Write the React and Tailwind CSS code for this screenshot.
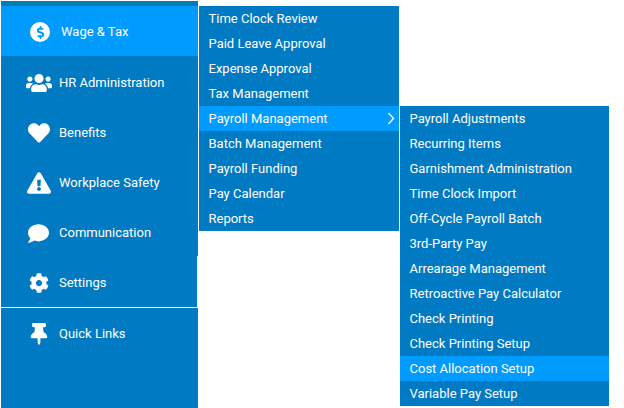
import React from 'react';
import { FaUsers, FaHeart, FaExclamationTriangle, FaComment, FaCog, FaThumbtack, FaDollarSign } from 'react-icons/fa';

const mainItems = [
    { label: 'HR Administration', icon: <FaUsers className="text-[26px]" /> },
    { label: 'Benefits', icon: <FaHeart className="text-[22px]" /> },
    { label: 'Workplace Safety', icon: <FaExclamationTriangle className="text-[24px]" /> },
    { label: 'Communication', icon: <FaComment className="text-[21px]" /> },
];

const payrollItems = [
    'Time Clock Review',
    'Paid Leave Approval',
    'Expense Approval',
    'Tax Management',
    'Payroll Management',
    'Batch Management',
    'Payroll Funding',
    'Pay Calendar',
    'Reports',
];

const subItems = [
    'Payroll Adjustments',
    'Recurring Items',
    'Garnishment Administration',
    'Time Clock Import',
    'Off-Cycle Payroll Batch',
    '3rd-Party Pay',
    'Arrearage Management',
    'Retroactive Pay Calculator',
    'Check Printing',
    'Check Printing Setup',
    'Cost Allocation Setup',
    'Variable Pay Setup',
];

const MenuRow = ({ label, active, children }) => (
    <div className={`flex items-center justify-between h-[25px] pl-[9.5px] pr-[4px] ${active ? 'bg-[#009bff]' : ''}`}>
        <span>{label}</span>
        {children}
    </div>
);

const App = () => {
    return (
        <div className="flex items-start w-[624px] h-[408px] overflow-hidden bg-white text-[13px] text-white font-['Roboto',sans-serif]">
            <div className="ml-px mt-px w-[197px] h-[407px] bg-[#007ac2]">
                <div className="h-[5px] bg-[#037bb9]"></div>
                <div className="flex items-center h-[50px] pt-[2px] bg-[#009bff]">
                    <div className="flex justify-center w-[58px] shrink-0 text-[#009bff] pl-[20px]">
                        <span className="flex items-center justify-center w-[20px] h-[20px] rounded-full bg-white">
                            <FaDollarSign className="text-[13px]" />
                        </span>
                    </div>
                    <span className="ml-[2px]">Wage &amp; Tax</span>
                </div>
                {mainItems.map(item => (
                    <div key={item.label} className="flex items-center h-[50px] pt-[4px]">
                        <div className="flex justify-center w-[58px] shrink-0 pl-[18px] pr-px">{item.icon}</div>
                        <span>{item.label}</span>
                    </div>
                ))}
                <div className="flex items-center h-[51px] pt-[3px] border-r border-white">
                    <div className="flex justify-center w-[58px] shrink-0 pl-[18px] pr-px">
                        <FaCog className="text-[20px]" />
                    </div>
                    <span>Settings</span>
                </div>
                <div className="flex items-center h-[50px] pt-[2px] border-t border-white">
                    <div className="flex justify-center w-[58px] shrink-0 pl-[18px] pr-px">
                        <FaThumbtack className="text-[22px]" />
                    </div>
                    <span>Quick Links</span>
                </div>
            </div>
            <div className="ml-px mt-[6px] w-[200px] bg-[#007ac2]">
                {payrollItems.map(label => (
                    <MenuRow key={label} label={label} active={label === 'Payroll Management'}>
                        {label === 'Payroll Management' && (
                            <svg width="8" height="13" viewBox="0 0 8 13" fill="none" stroke="white" strokeWidth="1.4">
                                <path d="M1.5 1 L6.5 6.5 L1.5 12" />
                            </svg>
                        )}
                    </MenuRow>
                ))}
            </div>
            <div className="ml-px mt-[106px] w-[209px] bg-[#007ac2]">
                {subItems.map(label => (
                    <MenuRow key={label} label={label} active={label === 'Cost Allocation Setup'} />
                ))}
            </div>
        </div>
    );
};

export default App;
